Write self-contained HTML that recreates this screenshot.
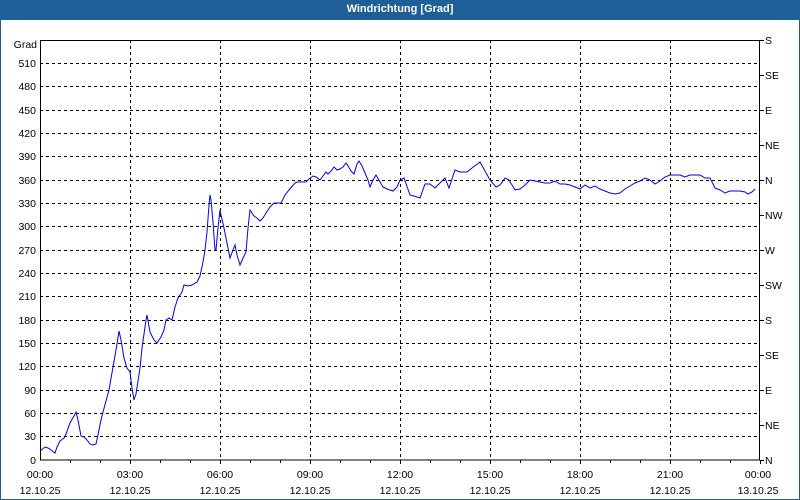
<!DOCTYPE html><html><head><style>
body{margin:0;width:800px;height:500px;overflow:hidden;background:#fff;font-family:"Liberation Sans",Tahoma,sans-serif;}
.win{position:absolute;left:0;top:0;width:798px;height:499px;border:1px solid #1e5f98;border-top:none;}
.tb{position:absolute;left:0;top:0;width:800px;height:20px;background:#1e5f98;color:#fff;font-weight:bold;font-size:11px;text-align:center;line-height:18px;}
</style></head><body>
<div class="win"></div>
<div class="tb">Windrichtung [Grad]</div>
<svg width="800" height="500" style="position:absolute;left:0;top:0" font-family="Liberation Sans, Tahoma, sans-serif" font-size="10.5">
<g stroke="#000" stroke-dasharray="3,3" stroke-width="1">
<line x1="40" x2="760" y1="63.5" y2="63.5"/><line x1="40" x2="760" y1="86.5" y2="86.5"/><line x1="40" x2="760" y1="110.5" y2="110.5"/><line x1="40" x2="760" y1="133.5" y2="133.5"/><line x1="40" x2="760" y1="156.5" y2="156.5"/><line x1="40" x2="760" y1="180.5" y2="180.5"/><line x1="40" x2="760" y1="203.5" y2="203.5"/><line x1="40" x2="760" y1="226.5" y2="226.5"/><line x1="40" x2="760" y1="250.5" y2="250.5"/><line x1="40" x2="760" y1="273.5" y2="273.5"/><line x1="40" x2="760" y1="296.5" y2="296.5"/><line x1="40" x2="760" y1="320.5" y2="320.5"/><line x1="40" x2="760" y1="343.5" y2="343.5"/><line x1="40" x2="760" y1="366.5" y2="366.5"/><line x1="40" x2="760" y1="390.5" y2="390.5"/><line x1="40" x2="760" y1="413.5" y2="413.5"/><line x1="40" x2="760" y1="436.5" y2="436.5"/>
<line x1="130.5" x2="130.5" y1="40" y2="460"/><line x1="220.5" x2="220.5" y1="40" y2="460"/><line x1="310.5" x2="310.5" y1="40" y2="460"/><line x1="400.5" x2="400.5" y1="40" y2="460"/><line x1="490.5" x2="490.5" y1="40" y2="460"/><line x1="580.5" x2="580.5" y1="40" y2="460"/><line x1="670.5" x2="670.5" y1="40" y2="460"/>
</g>
<rect x="40.5" y="40.5" width="719" height="419.5" fill="none" stroke="#000"/>
<g stroke="#000">
<path d="M70.5 460v3M100.5 460v3M130.5 460v4M160.5 460v3M190.5 460v3M220.5 460v4M250.5 460v3M280.5 460v3M310.5 460v4M340.5 460v3M370.5 460v3M400.5 460v4M430.5 460v3M460.5 460v3M490.5 460v4M520.5 460v3M550.5 460v3M580.5 460v4M610.5 460v3M640.5 460v3M670.5 460v4M700.5 460v3M730.5 460v3M760.5 460v4"/>
<path d="M760 40.5h4M760 75.5h4M760 110.5h4M760 145.5h4M760 180.5h4M760 215.5h4M760 250.5h4M760 285.5h4M760 320.5h4M760 355.5h4M760 390.5h4M760 425.5h4M760 460.5h4"/>
</g>
<polyline fill="none" stroke="#0000ee" stroke-width="1" points="40,451 45,447 48,448 51,450 55,453 57,447 60,441 64,438 66,434 70,423 74,416 76,412 78,420 81,436 84,437 87,440 90,444 93,445 96,444 98,435 101,420 103,412 106,401 109,390 113,367 116,350 119,331 121,340 124,358 127,368 130,372 132,388 134,400 136,394 140,368 142,348 144,334 146,320 147,315 150,332 154,340 157,343 161,337 164,330 166,320 169,318 172,320 175,307 178,298 182,292 184,285 188,286 192,285 197,282 200,276 203,262 205,250 207,232 209,205 210,195 211,200 213,222 215,250 216,250 218,228 220,210 221,215 224,228 227,243 230,258 233,250 235,245 237,255 240,265 243,258 246,252 248,228 250,210 254,216 257,218 260,221 263,218 266,213 270,207 274,203 277,203 281,203 285,195 289,190 295,183 297,182 306,182 309,179 313,176 316,177 320,180 323,176 326,172 328,174 331,171 334,167 337,170 340,169 343,167 346,163 348,166 351,171 354,174 357,164 359,161 362,166 365,173 368,180 370,187 373,180 376,175 380,182 383,187 387,189 393,191 397,187 400,180 404,178 410,195 414,196 420,198 425,184 430,184 435,188 440,183 445,178 449,188 455,170 460,172 467,172 472,168 480,162 490,180 496,187 500,185 505,178 509,180 515,190 520,189 525,185 530,180 535,181 540,182 545,183 550,183 555,181 560,184 565,184 570,185 575,187 580,189 585,185 590,188 595,186 600,189 605,191 610,193 615,194 620,193 625,189 630,186 635,183 640,181 645,178 650,180 655,184 660,181 665,177 670,175 675,175 680,175 685,177 690,175 695,175 700,175 705,178 710,178 715,188 720,190 725,193 730,191 740,191 745,192 748,194 752,192 755,189"/>
<g fill="#000" text-anchor="end">
<text x="37" y="48">Grad</text>
<text x="36" y="67">510</text><text x="36" y="90">480</text><text x="36" y="114">450</text><text x="36" y="137">420</text><text x="36" y="160">390</text><text x="36" y="184">360</text><text x="36" y="207">330</text><text x="36" y="230">300</text><text x="36" y="254">270</text><text x="36" y="277">240</text><text x="36" y="300">210</text><text x="36" y="324">180</text><text x="36" y="347">150</text><text x="36" y="370">120</text><text x="36" y="394">90</text><text x="36" y="417">60</text><text x="36" y="440">30</text><text x="36" y="464">0</text>
</g>
<g fill="#000">
<text x="765" y="44">S</text><text x="765" y="79">SE</text><text x="765" y="114">E</text><text x="765" y="149">NE</text><text x="765" y="184">N</text><text x="765" y="219">NW</text><text x="765" y="254">W</text><text x="765" y="289">SW</text><text x="765" y="324">S</text><text x="765" y="359">SE</text><text x="765" y="394">E</text><text x="765" y="429">NE</text><text x="765" y="464">N</text>
</g>
<g fill="#000" text-anchor="middle">
<text x="40" y="478">00:00</text><text x="130" y="478">03:00</text><text x="220" y="478">06:00</text><text x="310" y="478">09:00</text><text x="400" y="478">12:00</text><text x="490" y="478">15:00</text><text x="580" y="478">18:00</text><text x="670" y="478">21:00</text><text x="758" y="478">00:00</text>
<text x="40" y="494">12.10.25</text><text x="130" y="494">12.10.25</text><text x="220" y="494">12.10.25</text><text x="310" y="494">12.10.25</text><text x="400" y="494">12.10.25</text><text x="490" y="494">12.10.25</text><text x="580" y="494">12.10.25</text><text x="670" y="494">12.10.25</text><text x="758" y="494">13.10.25</text>
</g>
</svg>
</body></html>
